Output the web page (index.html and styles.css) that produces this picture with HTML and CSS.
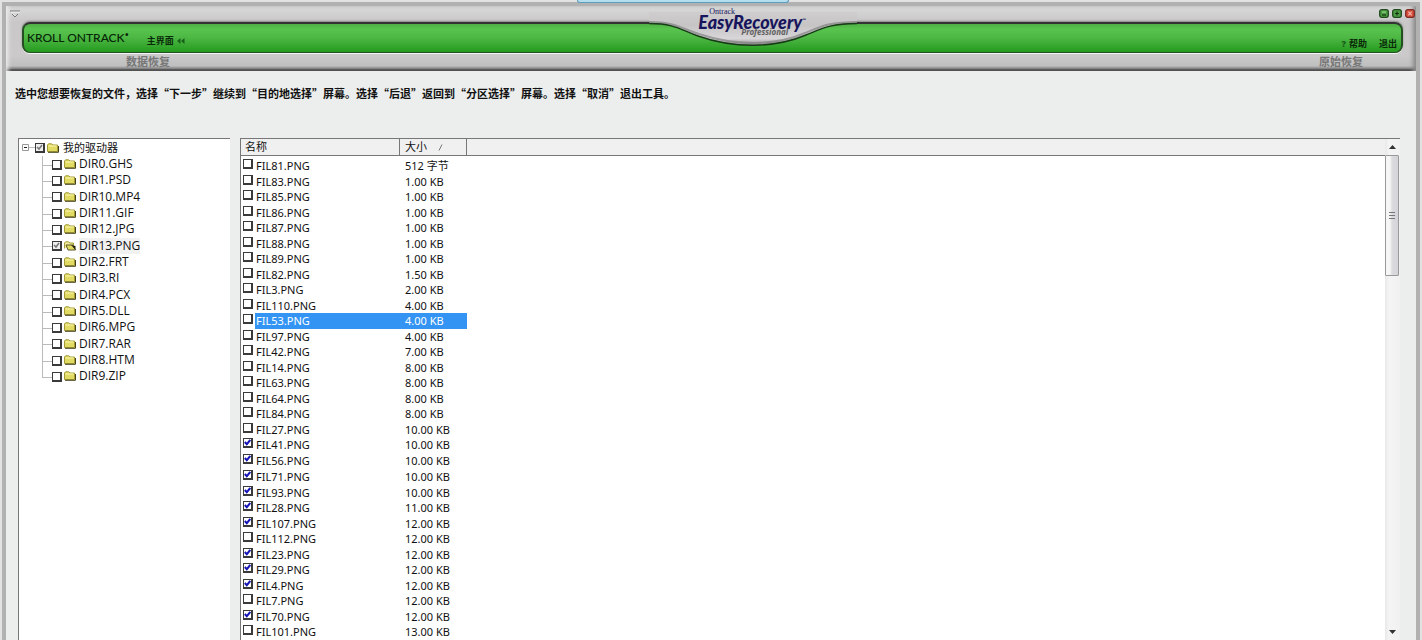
FILE: index.html
```html
<!DOCTYPE html>
<html lang="zh-CN">
<head>
<meta charset="utf-8">
<meta name="viewport" content="width=device-width, initial-scale=1">
<title>EasyRecovery Professional</title>
<link rel="stylesheet" href="styles.css">
</head>
<body>
<div class="dock-tab"></div>
<div class="window">
  <header class="header">
    <div class="titlebar">
      <button class="menu-button" aria-label="菜单">
        <svg width="11" height="9" viewBox="0 0 11 9"><path d="M0 1h10M2 4l3 3 3-3" fill="none" stroke="#777" stroke-width="1"/><path d="M1 2.200h9M3 3.500l2.500 2.500" fill="none" stroke="#fff" stroke-width=".7"/></svg>
      </button>
      <div class="window-buttons">
        <button class="window-button" aria-label="最小化"><svg width="10" height="9" viewBox="0 0 10 9"><rect x=".7" y=".7" width="8.600" height="7.600" rx="2" fill="#4c9c43" stroke="#1f4a1c" stroke-width="1.300"/><path d="M3 6h4" stroke="#12330f" stroke-width="1.200"/><path d="M3 3h4" stroke="#a7dc9c"/></svg></button>
        <button class="window-button" aria-label="最大化"><svg width="10" height="9" viewBox="0 0 10 9"><rect x=".7" y=".7" width="8.600" height="7.600" rx="2" fill="#4c9c43" stroke="#1f4a1c" stroke-width="1.300"/><path d="M3 4.500h4M5 2.500v4" stroke="#12330f" stroke-width="1.200"/></svg></button>
        <button class="window-button" aria-label="关闭"><svg width="10" height="9" viewBox="0 0 10 9"><rect x=".7" y=".7" width="8.600" height="7.600" rx="2" fill="#d9503e" stroke="#7c2b24" stroke-width="1.300"/><path d="M3.300 2.700l3.400 3.600M6.700 2.700L3.300 6.300" stroke="#f3b9ae" stroke-width="1.100"/></svg></button>
      </div>
    </div>
    <div class="bar">
      <div class="brand">KROLL ONTRACK<sup>•</sup></div>
      <a class="bar-link home" href="#">主界面
        <svg width="8" height="6" viewBox="0 0 8 6"><path d="M3.500 0v6L0 3zM7.500 0v6L4 3z" fill="#17601a"/></svg></a>
      <nav class="bar-right">
        <a class="bar-link" href="#"><b class="question">?</b> 帮助</a>
        <a class="bar-link" href="#">退出</a>
      </nav>
    </div>
    <div class="modes"><span>数据恢复</span><span>原始恢复</span></div>
    <div class="logo">
      <svg class="notch" width="208" height="42" viewBox="0 0 208 42">
        <defs>
          <linearGradient id="silver" x1="0" y1="0" x2="0" y2="1"><stop offset="0" stop-color="#cfcdce"/><stop offset=".4" stop-color="#c6c4c5"/><stop offset=".8" stop-color="#d8d6d8"/><stop offset="1" stop-color="#8f8d8f"/></linearGradient>
        </defs>
        <path d="M0 15C26 15 32 22 49 28C86 41 126 40 157 27C174 20 182 15 208 15V4H0z" fill="url(#silver)"/>
        <path d="M0 14C27 14 33 21 50 26C86 38 126 38 156 25C173 18 181 14 208 14" fill="none" stroke="#777" stroke-width="2" opacity=".6"/>
        <path d="M0 15.500C26 15.500 32 22 49 28C86 41 126 40 157 27C174 20 182 15.500 208 15.500" fill="none" stroke="#173b16" stroke-width="1.400"/>
      </svg>
      <div class="logo-text">
        <span class="logo-top">Ontrack</span>
        <span class="logo-main">EasyRecovery<sup>™</sup></span>
        <span class="logo-sub">Professional</span>
      </div>
    </div>
  </header>
  <main class="content">
    <p class="intro">选中您想要恢复的文件，选择“下一步”继续到“目的地选择”屏幕。选择“后退”返回到“分区选择”屏幕。选择“取消”退出工具。</p>
    <div class="panes">
      <section class="tree" aria-label="文件夹">
        <div class="tree-root">
          <button class="expander" aria-label="折叠"><svg width="7" height="7" viewBox="0 0 7 7"><path d="M.5.5h6v6h-6z" fill="#fff" stroke="#999"/><path d="M2 3.500h3" stroke="#222"/></svg></button>
          <span class="root-line"></span>
          <label class="node"><input type="checkbox" class="check mixed" checked><svg class="folder" width="12" height="10" viewBox="0 0 12 10"><path d="M.5 8.500V2L1.500.8h3L6 2h4.500v6.500z" fill="#e2db63" stroke="#a39a38"/><path d="M1.500 3h8" stroke="#fbf8b0"/><path d="M1 9.300h10.500V3" fill="none" stroke="#45421a"/></svg><span>我的驱动器</span></label>
        </div>
        <ul class="tree-list" id="folders"></ul>
      </section>
      <section class="files" aria-label="文件">
        <table class="file-table">
          <thead><tr><th class="col-name">名称</th><th class="col-size">大小<svg class="sort" width="5" height="7" viewBox="0 0 5 7"><path d="M1 6.500L4 .5" stroke="#777"/></svg></th><th></th></tr></thead>
          <tbody id="files"></tbody>
        </table>
        <div class="scrollbar">
          <button class="scroll-button" aria-label="向上滚动"><svg width="7" height="4" viewBox="0 0 7 4"><path d="M0 4L3.500 0 7 4z" fill="#333"/></svg></button>
          <div class="thumb"><i></i><i></i><i></i></div>
          <button class="scroll-button down" aria-label="向下滚动"><svg width="7" height="4" viewBox="0 0 7 4"><path d="M0 0L3.500 4 7 0z" fill="#333"/></svg></button>
        </div>
      </section>
    </div>
  </main>
</div>
<script src="script.js"></script>
</body>
</html>
```
FILE: styles.css
```css
* { box-sizing: border-box; }
body {
  margin: 0;
  background: #eceeed;
  color: #111;
  font: 11px/16px "Noto Sans", "Noto Sans CJK SC", sans-serif;
}
button { margin: 0; padding: 0; border: 0; background: none; display: flex; align-items: center; justify-content: center; }
a { color: inherit; text-decoration: none; }
svg { display: block; flex: none; }

.window {
  min-height: 100vh;
  padding: 2px 2px 0;
  background: #e2e2e2;
}
.header {
  position: relative;
  height: 69px;
  padding: 3px 13px 0 20px;
  border: solid #b1b1b1;
  border-width: 4px 4px 0;
  background: linear-gradient(#dadada, #c9c7c8 16px, #cbc9ca 50px, #bfbfbf 60px, #777 63px, #222 64px, #222 65px);
  box-shadow: inset 4px 0 4px -2px #eee, inset -4px 0 4px -1px #888;
}
.dock-tab {
  position: absolute;
  z-index: 2;
  top: 0;
  left: 41%;
  width: 212px;
  height: 3px;
  margin-left: -6px;
  background: #b4ddee;
  border: solid #5b9dbb;
  border-width: 0 1px 1px;
  border-radius: 0 0 4px 4px;
}
.titlebar { display: flex; justify-content: space-between; height: 13px; margin: 0 -12px 0 -20px; }
.menu-button { width: 18px; height: 10px; }
.window-buttons { display: flex; gap: 3px; }
.window-button { width: 10px; height: 9px; }
.bar {
  display: flex;
  height: 31px;
  margin-left: -4px;
  padding: 0 4px 0 3px;
  border: 2px solid #254f22;
  border-top-color: #333;
  border-bottom-width: 1px;
  border-radius: 8px;
  background: linear-gradient(#4faf45, #58c44e 5px, #4cb743 14px, #259a1f 28px);
  box-shadow: 0 1px 0 #f5f5f5, 0 -1px 2px #888;
  color: #092a09;
}
.brand { font: 500 12px/28px Lato, sans-serif; color: #062406; }
.brand sup { font-size: 7px; line-height: 0; }
.bar-link { display: flex; align-items: center; gap: 3px; height: 12px; font: bold 9px/12px "Noto Sans CJK SC", sans-serif; }
.home { margin: 11px 0 0 18px; }
.bar-right { display: flex; gap: 12px; margin: 14px 0 0 auto; }
.question { font-family: "Noto Sans", sans-serif; color: #17601a; }
.modes {
  display: flex;
  justify-content: space-between;
  padding: 0 40px 0 100px;
  font: bold 11px/16px "Noto Sans CJK SC", sans-serif;
  color: #777;
}
.logo { position: absolute; top: 2px; left: 53%; width: 208px; height: 42px; margin-left: -104px; }
.notch { position: absolute; left: 0; top: 0; }
.logo-text { position: relative; display: flex; flex-direction: column; width: 120px; margin-left: 49px; color: #17155c; }
.logo-top { padding-left: 11px; font: 8px/8px "Liberation Serif", serif; }
.logo-main { font: italic 900 18px/12px Lato, sans-serif; white-space: nowrap; }
.logo-main sup { font-size: 5px; line-height: 0; }
.logo-sub { padding-left: 43px; font: italic bold 8px/8px "Noto Sans", sans-serif; color: #626262; }

.content {
  min-height: calc(100vh - 71px);
  padding: 13px 16px 1px 12px;
  background: #eceeed;
  border: solid #b1b1b1;
  border-width: 0 4px;
}
.intro { margin: 0 0 36px -3px; font: bold 11px/18px "Noto Sans CJK SC", sans-serif; }
.panes { display: flex; gap: 10px; }
.tree { flex: none; width: 212px; background: #fff; border: solid #777; border-width: 1px 0 0 1px; font: 12px/16px "Open Sans", "Noto Sans CJK SC", sans-serif; }
.tree-root { display: flex; align-items: center; height: 17px; padding-left: 3px; font-size: 11px; }
.root-line { width: 6px; height: 1px; background: #bbb; }
.node { display: flex; align-items: center; }
.tree-list { margin: 0; padding: 0 0 0 23px; list-style: none; }
.tree-list li { display: flex; height: 16px; }
.tree-list li:nth-child(3n) { height: 17px; }
.branch {
  width: 10px;
  background: linear-gradient(#bbb, #bbb) 0 9px / 10px 1px no-repeat, linear-gradient(#bbb, #bbb) 0 0 / 1px 100% no-repeat;
}
li:last-child .branch { background-size: 10px 1px, 1px 9px; }
.folder { margin: 0 3px 0 2px; }
.tree-root .folder { margin-right: 4px; }
.selected-node { background: #f1f1f1; }
.check {
  appearance: none;
  flex: none;
  width: 10px;
  height: 10px;
  margin: 1px 0 0;
  border: solid #3a3a3a;
  border-width: 1px 2px 2px 1px;
  background: #fff;
}
.mixed:checked {
  background: #eee url("data:image/svg+xml,%3Csvg xmlns='http://www.w3.org/2000/svg' viewBox='0 0 7 7'%3E%3Cpath d='M1 3l2 2 3-4' fill='none' stroke='%23777' stroke-width='1.500'/%3E%3C/svg%3E") center / 7px 7px no-repeat;
}

.files { flex: 1; min-width: 0; display: flex; align-items: stretch; background: #fff; border: solid #777; border-width: 1px 0 0 1px; }
.file-table { flex: 1; align-self: flex-start; border-collapse: separate; border-spacing: 0; table-layout: fixed; width: 100%; }
th { height: 17px; padding: 0 0 0 4px; text-align: left; font-weight: normal; line-height: 16px; background: #f0f0f0; border-right: 1px solid #777; border-bottom: 1px solid #777; }
th:last-child { border-right: 0; }
.col-name { width: 159px; }
.col-size { width: 67px; padding-left: 5px; }
.sort { display: inline-block; margin-left: 11px; }
td { padding: 0; line-height: 15px; white-space: nowrap; }
tbody tr:nth-child(odd) td, tbody tr:nth-child(20n) td { line-height: 16px; }
tbody tr:first-child td { padding-top: 2px; }
td:nth-child(2) { padding-left: 5px; }
.file-label { display: flex; padding-left: 2px; }
.file-label span { flex: 1; margin-left: 2px; padding-left: 1px; }
.file-label .check { margin-top: 1px; }
.file-label .check:checked {
  background: #fff url("data:image/svg+xml,%3Csvg xmlns='http://www.w3.org/2000/svg' viewBox='0 0 7 7'%3E%3Cpath d='M.8 3l2 2.200L6.300 1' fill='none' stroke='%231414b8' stroke-width='2'/%3E%3C/svg%3E") center / 7px 7px no-repeat;
}
.selected-file span, .selected-file td:nth-child(2) { background: #3394f4; color: #fff; }

.scrollbar { flex: none; display: flex; flex-direction: column; width: 15px; background: linear-gradient(90deg, #e8e8e8, #f4f4f4 4px, #f1f1f1); }
.scroll-button { width: 14px; height: 16px; }
.down { margin-top: auto; }
.thumb {
  display: flex;
  flex-direction: column;
  align-items: center;
  justify-content: center;
  gap: 2px;
  width: 14px;
  height: 121px;
  border: 1px solid #999;
  border-radius: 1px;
  background: linear-gradient(90deg, #f6f6f6 4px, #dcdce0 6px, #d3d3d8);
}
.thumb i { width: 6px; height: 1px; background: #777; }
```
FILE: script.js
```js
const folders = ["DIR0.GHS", "DIR1.PSD", "DIR10.MP4", "DIR11.GIF", "DIR12.JPG", "DIR13.PNG", "DIR2.FRT", "DIR3.RI", "DIR4.PCX", "DIR5.DLL", "DIR6.MPG", "DIR7.RAR", "DIR8.HTM", "DIR9.ZIP"];
const openFolder = "DIR13.PNG";

// [number, size, ticked]
const files = [
  [81, "512 字节"], [83, "1.00 KB"], [85, "1.00 KB"], [86, "1.00 KB"], [87, "1.00 KB"],
  [88, "1.00 KB"], [89, "1.00 KB"], [82, "1.50 KB"], [3, "2.00 KB"], [110, "4.00 KB"],
  [53, "4.00 KB"], [97, "4.00 KB"], [42, "7.00 KB"], [14, "8.00 KB"], [63, "8.00 KB"],
  [64, "8.00 KB"], [84, "8.00 KB"], [27, "10.00 KB"], [41, "10.00 KB", 1], [56, "10.00 KB", 1],
  [71, "10.00 KB", 1], [93, "10.00 KB", 1], [28, "11.00 KB", 1], [107, "12.00 KB", 1], [112, "12.00 KB"],
  [23, "12.00 KB", 1], [29, "12.00 KB", 1], [4, "12.00 KB", 1], [7, "12.00 KB"], [70, "12.00 KB", 1],
  [101, "13.00 KB"]
];
const selectedFile = 53;

const closedIcon = '<path d="M.5 8.500V2L1.500.8h3L6 2h4.500v6.500z" fill="#e2db63" stroke="#a39a38"/><path d="M1.500 3h8" stroke="#fbf8b0"/><path d="M1 9.300h10.500V3" fill="none" stroke="#45421a"/>';
const openIcon = '<path d="M.5 7.500V2L1.500.8h3L6 2h3.500v2" fill="#f1ed9a" stroke="#a39a38"/><path d="M2 4h7l2.500 5H4z" fill="#e2db63" stroke="#5b5724"/><path d="M7 4l4.500 5V5z" fill="#24230f"/>';

document.getElementById("folders").innerHTML = folders.map(name => {
  const open = name === openFolder;
  return `<li><span class="branch"></span><label class="node"><input type="checkbox" class="check mixed"${open ? " checked" : ""}><svg class="folder" width="12" height="10" viewBox="0 0 12 10">${open ? openIcon : closedIcon}</svg><span${open ? ' class="selected-node"' : ""}>${name}</span></label></li>`;
}).join("");

document.getElementById("files").innerHTML = files.map(([id, size, ticked]) =>
  `<tr${id === selectedFile ? ' class="selected-file"' : ""}><td><label class="file-label"><input type="checkbox" class="check"${ticked ? " checked" : ""}><span>FIL${id}.PNG</span></label></td><td>${size}</td><td></td></tr>`
).join("");
```
